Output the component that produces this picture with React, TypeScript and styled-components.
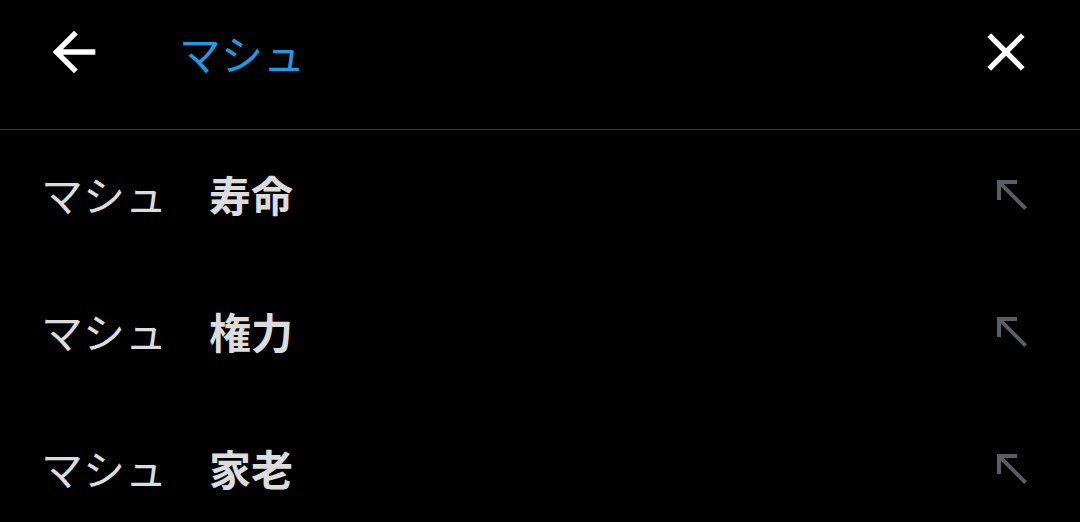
import React from "react";
import styled, { createGlobalStyle } from "styled-components";

const GlobalStyle = createGlobalStyle`
  html, body { margin: 0; padding: 0; background: #000; }
  body { font-family: "Noto Sans CJK JP", "Noto Sans", sans-serif; }
`;

const Screen = styled.div`
  width: 1080px;
  height: 522px;
  background: #000;
  overflow: hidden;
`;

const Header = styled.header`
  height: 130px;
  display: flex;
  align-items: center;
  padding: 0 42px 0 42px;
  box-sizing: border-box;
  border-bottom: 1px solid #3a3a3a;
`;

const IconButton = styled.button`
  width: 64px;
  height: 64px;
  padding: 0;
  border: none;
  background: transparent;
  color: #fff;
  display: flex;
  align-items: center;
  justify-content: center;
  margin-top: -25px;
  svg { width: 64px; height: 64px; display: block; }
`;

const Title = styled.div`
  flex: 1;
  margin-left: 73px;
  margin-top: -24px;
  color: #1e9be6;
  font-size: 42px;
  line-height: 1;
`;

const List = styled.ul`
  list-style: none;
  margin: 0;
  padding: 0;
`;

const Row = styled.li`
  height: 137px;
  display: flex;
  align-items: center;
  padding: 0 45px 0 41px;
  box-sizing: border-box;
  margin-top: -4px;
  margin-bottom: 4px;
`;

const Label = styled.div`
  flex: 1;
  color: #dcdcdc;
  font-size: 42px;
  line-height: 1;
  white-space: pre;
  margin-top: -2px;
`;

const Bold = styled.span`
  font-weight: 700;
`;

const FillArrow = styled.div`
  width: 48px;
  height: 48px;
  color: #5a5d61;
  margin-top: -2px;
  svg { width: 48px; height: 48px; display: block; }
`;

const BackIcon = () => (
  <svg viewBox="0 0 24 24" fill="currentColor">
    <path d="M20 11H7.83l5.59-5.59L12 4l-8 8 8 8 1.41-1.41L7.83 13H20v-2z" />
  </svg>
);

const CloseIcon = () => (
  <svg viewBox="0 0 24 24" fill="currentColor">
    <path d="M19 6.41 17.59 5 12 10.59 6.41 5 5 6.41 10.59 12 5 17.59 6.41 19 12 13.41 17.59 19 19 17.59 13.41 12z" />
  </svg>
);

const NorthWestIcon = () => (
  <svg viewBox="0 0 24 24" fill="currentColor">
    <path d="M5 15h2V8.41L18.59 20 20 18.59 8.41 7H15V5H5z" />
  </svg>
);

const suggestions = ["寿命", "権力", "家老"];

export default function App() {
  return (
    <Screen>
      <GlobalStyle />
      <Header>
        <IconButton aria-label="戻る">
          <BackIcon />
        </IconButton>
        <Title>マシュ</Title>
        <IconButton aria-label="閉じる">
          <CloseIcon />
        </IconButton>
      </Header>
      <List>
        {suggestions.map((s) => (
          <Row key={s}>
            <Label>
              マシュ　<Bold>{s}</Bold>
            </Label>
            <FillArrow>
              <NorthWestIcon />
            </FillArrow>
          </Row>
        ))}
      </List>
    </Screen>
  );
}
